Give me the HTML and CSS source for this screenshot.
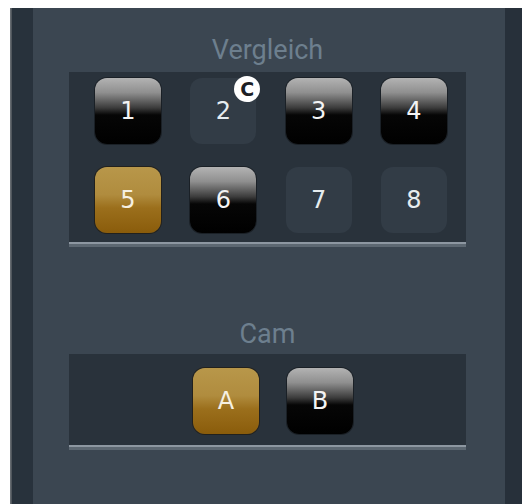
FILE: index.html
```html
<!DOCTYPE html>
<html lang="de">
<head>
<meta charset="utf-8">
<title>Vergleich</title>
<link rel="stylesheet" href="styles.css">
</head>
<body>
<div class="frame">
  <div class="rail rail-left"></div>
  <main class="panel">
    <h2 class="group-title">Vergleich</h2>
    <section class="group group-compare">
      <button class="key key-dark">1</button>
      <button class="key key-off">2<span class="badge">C</span></button>
      <button class="key key-dark">3</button>
      <button class="key key-dark">4</button>
      <button class="key key-gold">5</button>
      <button class="key key-dark">6</button>
      <button class="key key-off">7</button>
      <button class="key key-off">8</button>
    </section>
    <h2 class="group-title group-title-cam">Cam</h2>
    <section class="group group-cam">
      <button class="key key-gold">A</button>
      <button class="key key-dark">B</button>
    </section>
  </main>
  <div class="rail rail-right"></div>
</div>
</body>
</html>
```
FILE: styles.css
```css
html, body {
  margin: 0;
  padding: 0;
  background: #ffffff;
}

.frame {
  display: flex;
  margin: 8px 0 0 10px;
  height: 496px;
}

.rail-left {
  width: 23px;
  background: linear-gradient(to right, #70757a 0, #464d54 2px, #28323c 2px, #28323c 100%);
}

.rail-right {
  flex: 1;
  background: #27303a;
}

.panel {
  width: 472px;
  box-sizing: border-box;
  padding: 26px 39px 0 36px;
  background: #3b4651;
}

.group-title {
  margin: 0;
  height: 32px;
  font: 400 27px/32px "Roboto", "Liberation Sans", sans-serif;
  color: #6d7f8e;
  text-align: center;
}

.group-title-cam {
  margin-top: 71px;
}

.group {
  margin-top: 6px;
  background: #29323b;
  border-bottom: 3px solid #5d6872;
  box-shadow: inset 0 -2px 0 #8d97a1;
  box-sizing: border-box;
}

.group-compare {
  display: grid;
  grid-template-columns: repeat(4, 66px);
  column-gap: 29.33px;
  row-gap: 23px;
  padding: 6px 0 11px 26px;
  height: 175px;
}

.group-cam {
  margin-top: 4px;
  display: flex;
  gap: 28px;
  padding: 14px 0 13px 124px;
  height: 96px;
}

.key {
  position: relative;
  width: 66px;
  height: 66px;
  padding: 0;
  border: none;
  border-radius: 12px;
  font: 400 24px/66px "DejaVu Sans", "Verdana", sans-serif;
  color: #f4f4f4;
  text-align: center;
}

.key-dark {
  background: linear-gradient(#b3b3b3 0%, #8f8f8f 22%, #3c3c3c 45%, #060606 56%, #000000 100%);
  box-shadow: 0 0 0 1px rgba(0, 0, 0, 0.35);
}

.key-off {
  background: #323c46;
  color: #e6ecef;
}

.key-gold {
  background: linear-gradient(#b8974a 0%, #b08c3e 42%, #9b6f1c 62%, #8a5c0b 100%);
  box-shadow: 0 0 0 1px rgba(30, 20, 5, 0.55);
  color: #f6f0e2;
}

.badge {
  position: absolute;
  left: 44px;
  top: -2px;
  width: 26px;
  height: 26px;
  border-radius: 50%;
  background: #ffffff;
  color: #1c2024;
  font: 700 19px/26px "DejaVu Sans", sans-serif;
  text-align: center;
}
```
